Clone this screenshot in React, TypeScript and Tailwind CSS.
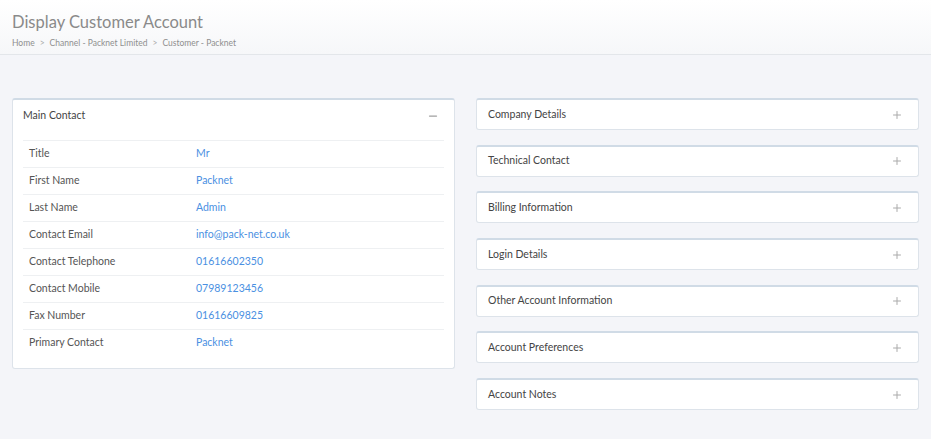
import { Minus, Plus } from "lucide-react";

const contactRows: [string, string][] = [
  ["Title", "Mr"],
  ["First Name", "Packnet"],
  ["Last Name", "Admin"],
  ["Contact Email", "info@pack-net.co.uk"],
  ["Contact Telephone", "01616602350"],
  ["Contact Mobile", "07989123456"],
  ["Fax Number", "01616609825"],
  ["Primary Contact", "Packnet"],
];

const sections = [
  "Company Details",
  "Technical Contact",
  "Billing Information",
  "Login Details",
  "Other Account Information",
  "Account Preferences",
  "Account Notes",
];

export default function App() {
  return (
    <div className="min-h-[439px] bg-[#f4f5f9] font-['Lato',sans-serif]">
      <div className="h-[55px] border-b border-[#e3e6ea] bg-gradient-to-b from-white to-[#f6f7f9] px-3 pt-[12px]">
        <h1 className="text-[16.5px] leading-[20px] text-[#8a8a8a]">Display Customer Account</h1>
        <div className="mt-[5px] flex items-center gap-[5px] text-[8.5px] text-[#8f8f8f]">
          <span>Home</span>
          <span className="text-[#aaa]">&gt;</span>
          <span>Channel - Packnet Limited</span>
          <span className="text-[#aaa]">&gt;</span>
          <span>Customer - Packnet</span>
        </div>
      </div>

      <div className="grid grid-cols-2 items-start gap-[21px] px-3 pt-[43px]">
        <div className="rounded-[3px] border border-t-2 border-[#dde3ea] border-t-[#d0dbe6] bg-white">
          <div className="flex h-[31px] items-center justify-between pl-[10px] pr-[15px]">
            <span className="text-[10.5px] text-[#444]">Main Contact</span>
            <Minus size={12} strokeWidth={2.5} className="text-[#a0a0a0]" />
          </div>
          <div className="px-[10px] pb-[12px] pt-[9px]">
            {contactRows.map(([label, value]) => (
              <div key={label} className="grid h-[27px] grid-cols-[167px_1fr] items-center border-t border-[#eef0f2] px-[6px] text-[10.5px]">
                <span className="text-[#555]">{label}</span>
                <span className="text-[#4a90e2]">{value}</span>
              </div>
            ))}
          </div>
        </div>

        <div className="flex flex-col gap-[14.7px]">
          {sections.map((s) => (
            <div key={s} className="flex h-[32px] items-center justify-between rounded-[3px] border border-t-2 border-[#dde3ea] border-t-[#d0dbe6] bg-white pl-[11px] pr-[15px]">
              <span className="text-[10.5px] text-[#444]">{s}</span>
              <Plus size={12} strokeWidth={2} className="text-[#aaa]" />
            </div>
          ))}
        </div>
      </div>
    </div>
  );
}
